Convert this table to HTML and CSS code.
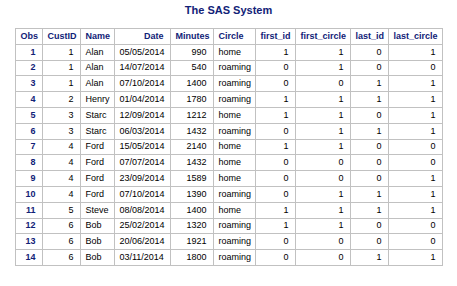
FILE: index.html
```html
<!DOCTYPE html>
<html>
<head>
<meta charset="utf-8">
<link rel="stylesheet" href="styles.css">
</head>
<body>
<div class="title">The SAS System</div>
<table class="sas">
<colgroup>
<col class="c-obs"><col class="c-cust"><col class="c-name"><col class="c-date"><col class="c-min"><col class="c-circ"><col class="c-fid"><col class="c-fc"><col class="c-lid"><col class="c-lc">
</colgroup>
<thead>
<tr><th class="r">Obs</th><th class="r">CustID</th><th class="l">Name</th><th class="r">Date</th><th class="r">Minutes</th><th class="l">Circle</th><th class="r">first_id</th><th class="r">first_circle</th><th class="r">last_id</th><th class="r">last_circle</th></tr>
</thead>
<tbody>
<tr><th class="r">1</th><td class="r">1</td><td>Alan</td><td class="r">05/05/2014</td><td class="r">990</td><td>home</td><td class="r">1</td><td class="r">1</td><td class="r">0</td><td class="r">1</td></tr>
<tr><th class="r">2</th><td class="r">1</td><td>Alan</td><td class="r">14/07/2014</td><td class="r">540</td><td>roaming</td><td class="r">0</td><td class="r">1</td><td class="r">0</td><td class="r">0</td></tr>
<tr><th class="r">3</th><td class="r">1</td><td>Alan</td><td class="r">07/10/2014</td><td class="r">1400</td><td>roaming</td><td class="r">0</td><td class="r">0</td><td class="r">1</td><td class="r">1</td></tr>
<tr><th class="r">4</th><td class="r">2</td><td>Henry</td><td class="r">01/04/2014</td><td class="r">1780</td><td>roaming</td><td class="r">1</td><td class="r">1</td><td class="r">1</td><td class="r">1</td></tr>
<tr><th class="r">5</th><td class="r">3</td><td>Starc</td><td class="r">12/09/2014</td><td class="r">1212</td><td>home</td><td class="r">1</td><td class="r">1</td><td class="r">0</td><td class="r">1</td></tr>
<tr><th class="r">6</th><td class="r">3</td><td>Starc</td><td class="r">06/03/2014</td><td class="r">1432</td><td>roaming</td><td class="r">0</td><td class="r">1</td><td class="r">1</td><td class="r">1</td></tr>
<tr><th class="r">7</th><td class="r">4</td><td>Ford</td><td class="r">15/05/2014</td><td class="r">2140</td><td>home</td><td class="r">1</td><td class="r">1</td><td class="r">0</td><td class="r">0</td></tr>
<tr><th class="r">8</th><td class="r">4</td><td>Ford</td><td class="r">07/07/2014</td><td class="r">1432</td><td>home</td><td class="r">0</td><td class="r">0</td><td class="r">0</td><td class="r">0</td></tr>
<tr><th class="r">9</th><td class="r">4</td><td>Ford</td><td class="r">23/09/2014</td><td class="r">1589</td><td>home</td><td class="r">0</td><td class="r">0</td><td class="r">0</td><td class="r">1</td></tr>
<tr><th class="r">10</th><td class="r">4</td><td>Ford</td><td class="r">07/10/2014</td><td class="r">1390</td><td>roaming</td><td class="r">0</td><td class="r">1</td><td class="r">1</td><td class="r">1</td></tr>
<tr><th class="r">11</th><td class="r">5</td><td>Steve</td><td class="r">08/08/2014</td><td class="r">1400</td><td>home</td><td class="r">1</td><td class="r">1</td><td class="r">1</td><td class="r">1</td></tr>
<tr><th class="r">12</th><td class="r">6</td><td>Bob</td><td class="r">25/02/2014</td><td class="r">1320</td><td>roaming</td><td class="r">1</td><td class="r">1</td><td class="r">0</td><td class="r">0</td></tr>
<tr><th class="r">13</th><td class="r">6</td><td>Bob</td><td class="r">20/06/2014</td><td class="r">1921</td><td>roaming</td><td class="r">0</td><td class="r">0</td><td class="r">0</td><td class="r">0</td></tr>
<tr><th class="r">14</th><td class="r">6</td><td>Bob</td><td class="r">03/11/2014</td><td class="r">1800</td><td>roaming</td><td class="r">0</td><td class="r">0</td><td class="r">1</td><td class="r">1</td></tr>
</tbody>
</table>
</body>
</html>
```
FILE: styles.css
```css
html, body {
  margin: 0;
  padding: 0;
  background: #ffffff;
}
body {
  font-family: "Liberation Sans", Arial, sans-serif;
}
.title {
  height: 28px;
  box-sizing: border-box;
  padding-top: 3px;
  text-align: center;
  font-size: 11px;
  line-height: 14px;
  font-weight: bold;
  color: #112277;
}
.sas {
  margin: 0 auto;
  border-collapse: collapse;
  table-layout: fixed;
  width: 427px;
  font-size: 9px;
  border: 1px solid #c1c1c1;
}
.sas th, .sas td {
  border: 1px solid #c1c1c1;
  height: 15.8px;
  padding: 0 6px 0 5px;
  box-sizing: border-box;
  line-height: 11px;
  white-space: nowrap;
  overflow: hidden;
}
.sas th {
  color: #112277;
  font-weight: bold;
}
.sas td {
  color: #000000;
}
.sas .r { text-align: right; }
.sas .l, .sas td { text-align: left; }
.sas td.r { text-align: right; }
.sas thead th.r { text-align: right; }
.c-obs { width: 27px; }
.c-cust { width: 38px; }
.c-name { width: 34px; }
.c-date { width: 56px; }
.c-min { width: 43px; }
.c-circ { width: 42px; }
.c-fid { width: 40px; }
.c-fc { width: 55px; }
.c-lid { width: 38px; }
.c-lc { width: 54px; }
```
